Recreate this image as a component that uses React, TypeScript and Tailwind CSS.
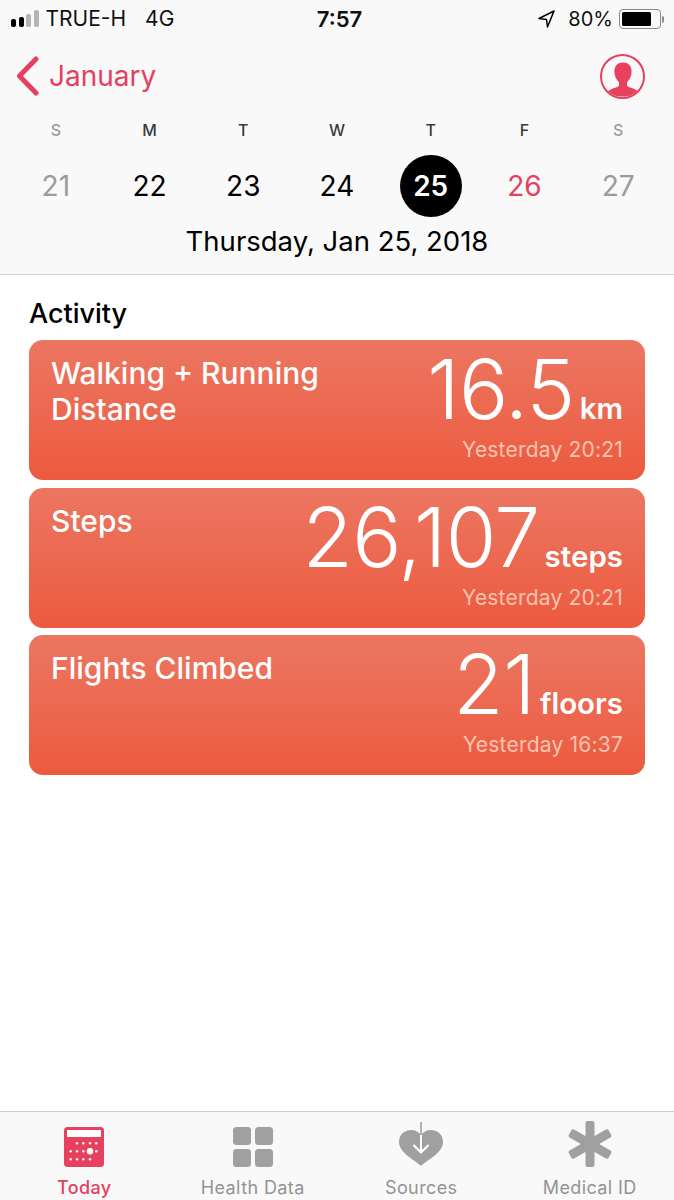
import { ReactNode } from 'react';

const days = [
  { letter: 'S', num: '21', tone: 'text-[#9b9b9b]' },
  { letter: 'M', num: '22', tone: 'text-black' },
  { letter: 'T', num: '23', tone: 'text-black' },
  { letter: 'W', num: '24', tone: 'text-black' },
  { letter: 'T', num: '25', tone: 'text-white', selected: true },
  { letter: 'F', num: '26', tone: 'text-[#e5405f]' },
  { letter: 'S', num: '27', tone: 'text-[#9b9b9b]' },
];

const cards = [
  { title: ['Walking + Running', 'Distance'], value: '16.5', unit: 'km', time: 'Yesterday 20:21' },
  { title: ['Steps'], value: '26,107', unit: 'steps', time: 'Yesterday 20:21' },
  { title: ['Flights Climbed'], value: '21', unit: 'floors', time: 'Yesterday 16:37' },
];

function TodayIcon() {
  const dots = [
    [13, 16.3], [19.3, 16.3], [26, 16.3], [32.3, 16.3],
    [6.7, 24.3], [13, 24.3], [19.3, 24.3], [32.3, 24.3],
    [6.7, 32.3], [13, 32.3], [19.3, 32.3], [26, 32.3],
  ];
  return (
    <svg width="40" height="40" viewBox="0 0 40 40">
      <rect x="0" y="0" width="40" height="40" rx="3.5" fill="#e8415f" />
      <rect x="3" y="3" width="34" height="7" fill="#fff" />
      {dots.map(([x, y]) => <circle key={`${x}-${y}`} cx={x} cy={y} r="1.2" fill="#fff" />)}
      <circle cx="26" cy="24.3" r="3.2" fill="#fff" />
    </svg>
  );
}

function HealthDataIcon() {
  return (
    <svg width="40" height="40" viewBox="0 0 40 40" fill="#a0a0a0">
      <rect x="0" y="0" width="18" height="18" rx="3.5" />
      <rect x="22" y="0" width="18" height="18" rx="3.5" />
      <rect x="0" y="22" width="18" height="18" rx="3.5" />
      <rect x="22" y="22" width="18" height="18" rx="3.5" />
    </svg>
  );
}

function SourcesIcon() {
  return (
    <svg width="46" height="46" viewBox="0 0 46 46">
      <path
        d="M23 45 C17 39 1 32 1 21 C1 13 7 9 13 9 C17.5 9 21 11 23 14 C25 11 28.5 9 33 9 C39 9 45 13 45 21 C45 32 29 39 23 45 Z"
        fill="#a0a0a0"
      />
      <path d="M23 1 V14" stroke="#a0a0a0" strokeWidth="1.6" fill="none" />
      <path d="M23 14 V31" stroke="#fff" strokeWidth="2" fill="none" />
      <path d="M15.5 24 L23 31.5 L30.5 24" stroke="#fff" strokeWidth="2.2" fill="none" />
    </svg>
  );
}

function MedicalIcon() {
  return (
    <svg width="44" height="46" viewBox="0 0 44 46" fill="#a0a0a0">
      <rect x="17.5" y="0" width="9" height="46" rx="2" />
      <rect x="17.5" y="0" width="9" height="46" rx="2" transform="rotate(60 22 23)" />
      <rect x="17.5" y="0" width="9" height="46" rx="2" transform="rotate(-60 22 23)" />
    </svg>
  );
}

function TabItem({ icon, label, active }: { icon: ReactNode; label: string; active?: boolean }) {
  return (
    <div className="flex flex-col items-center pt-[9px]">
      <div className="h-[46px] flex items-end justify-center">{icon}</div>
      <span className={`mt-[11px] text-[18px] leading-[20px] tracking-[0.4px] ${active ? 'text-[#e5405f] font-medium' : 'text-[#939393]'}`}>
        {label}
      </span>
    </div>
  );
}

export default function App() {
  return (
    <div className="w-[674px] h-[1200px] bg-white flex flex-col overflow-hidden font-['Inter',sans-serif]">
      {/* Header */}
      <header className="h-[275px] shrink-0 bg-[#f9f9f9] border-b border-[#cfcfd1]">
        <div className="h-[38px] grid grid-cols-[1fr_auto_1fr] items-center pl-[11px] pr-[10px]">
          <div className="flex items-center">
            <div className="flex items-end gap-[2.5px] mt-[-1px]">
              <span className="w-[5px] h-[8px] rounded-[2px] bg-black" />
              <span className="w-[5px] h-[10px] rounded-[2px] bg-black" />
              <span className="w-[5px] h-[13px] rounded-[2px] bg-[#b4b4b4]" />
              <span className="w-[5px] h-[17px] rounded-[2px] bg-[#b4b4b4]" />
            </div>
            <span className="ml-[7px] text-[21px] text-[#111]">TRUE-H</span>
            <span className="ml-[19px] text-[21px] text-[#111]">4G</span>
          </div>
          <span className="text-center text-[22px] font-semibold text-[#111] pl-[4px]">7:57</span>
          <div className="flex items-center justify-end">
            <svg width="17" height="18" viewBox="0 0 17 18" fill="none" stroke="#000" strokeWidth="1.5" strokeLinejoin="round">
              <path d="M16 1 L1 8.5 L8.5 9.5 L9.5 17 Z" />
            </svg>
            <span className="ml-[13px] text-[20px] text-[#111]">80%</span>
            <span className="ml-[6px] w-[42px] h-[20px] rounded-[4px] border border-[#8a8a8a] p-[2px] flex">
              <span className="w-[29px] bg-black rounded-[1.5px]" />
            </span>
            <span className="ml-[1px] w-[2px] h-[7px] rounded-r-[2px] bg-[#8a8a8a]" />
          </div>
        </div>

        <div className="h-[76px] flex items-center pl-[16px] pr-[29px]">
          <svg width="23" height="40" viewBox="0 0 23 40" fill="none" stroke="#e5405f" strokeWidth="5" strokeLinecap="round" strokeLinejoin="round">
            <path d="M20 3 L3.5 20 L20 37" />
          </svg>
          <span className="ml-[10px] text-[28px] text-[#e5405f]">January</span>
          <div className="ml-auto w-[45px] h-[45px] rounded-full border-2 border-[#e8415f] overflow-hidden flex items-end justify-center">
            <svg width="36" height="35" viewBox="0 0 40 38" fill="#e8415f">
              <path d="M20 0 C27 0 30 5 29.5 11 C29.3 16 26.5 20 24.5 22 L24.5 26 C28 29 36 29 39 35 L40 38 L0 38 L1 35 C4 29 12 29 15.5 26 L15.5 22 C13.5 20 10.7 16 10.5 11 C10 5 13 0 20 0 Z" />
            </svg>
          </div>
        </div>

        <div className="grid grid-cols-7 px-[9px] mt-[6px]">
          {days.map((day, i) => (
            <div key={i} className="flex flex-col items-center">
              <span className={`text-[16px] leading-[20px] font-medium ${i === 0 || i === 6 ? 'text-[#9b9b9b]' : 'text-[#3a3a3a]'}`}>{day.letter}</span>
              <span
                className={`mt-[15px] w-[62px] h-[62px] rounded-full flex items-center justify-center text-[28px] ${day.tone} ${day.selected ? 'bg-black font-semibold' : ''}`}
              >
                {day.num}
              </span>
            </div>
          ))}
        </div>

        <div className="text-center text-[27.5px] leading-[34px] text-black mt-[7px]">Thursday, Jan 25, 2018</div>
      </header>

      {/* Activity */}
      <main className="flex-1 px-[29px]">
        <h2 className="mt-[22px] text-[27px] leading-[34px] font-medium text-black">Activity</h2>
        <div className="mt-[9px] flex flex-col gap-[7.5px]">
          {cards.map(card => (
            <div
              key={card.value}
              className="h-[140px] rounded-[14px] bg-gradient-to-b from-[#ec7661] to-[#ec5a3f] flex justify-between pl-[22px] pr-[22px] text-white"
            >
              <div className="pt-[15px] text-[30px] leading-[36px] font-medium">
                {card.title.map(line => (
                  <div key={line}>{line}</div>
                ))}
              </div>
              <div className="flex flex-col items-end">
                <div className="flex items-baseline h-[97px] pt-[10px]">
                  <span className="text-[82px] leading-[80px] font-[260] tracking-[-0.5px]">{card.value}</span>
                  <span className="ml-[5px] text-[29.5px] leading-[32px] font-semibold">{card.unit}</span>
                </div>
                <div className="text-[21px] leading-[26px] text-[#fbc4b0] tracking-[0.2px]">{card.time}</div>
              </div>
            </div>
          ))}
        </div>
      </main>

      {/* Tab bar */}
      <nav className="h-[89px] shrink-0 bg-[#f9f9f9] border-t border-[#cfcfd1] grid grid-cols-4">
        <TabItem icon={<TodayIcon />} label="Today" active />
        <TabItem icon={<HealthDataIcon />} label="Health Data" />
        <TabItem icon={<SourcesIcon />} label="Sources" />
        <TabItem icon={<MedicalIcon />} label="Medical ID" />
      </nav>
    </div>
  );
}
